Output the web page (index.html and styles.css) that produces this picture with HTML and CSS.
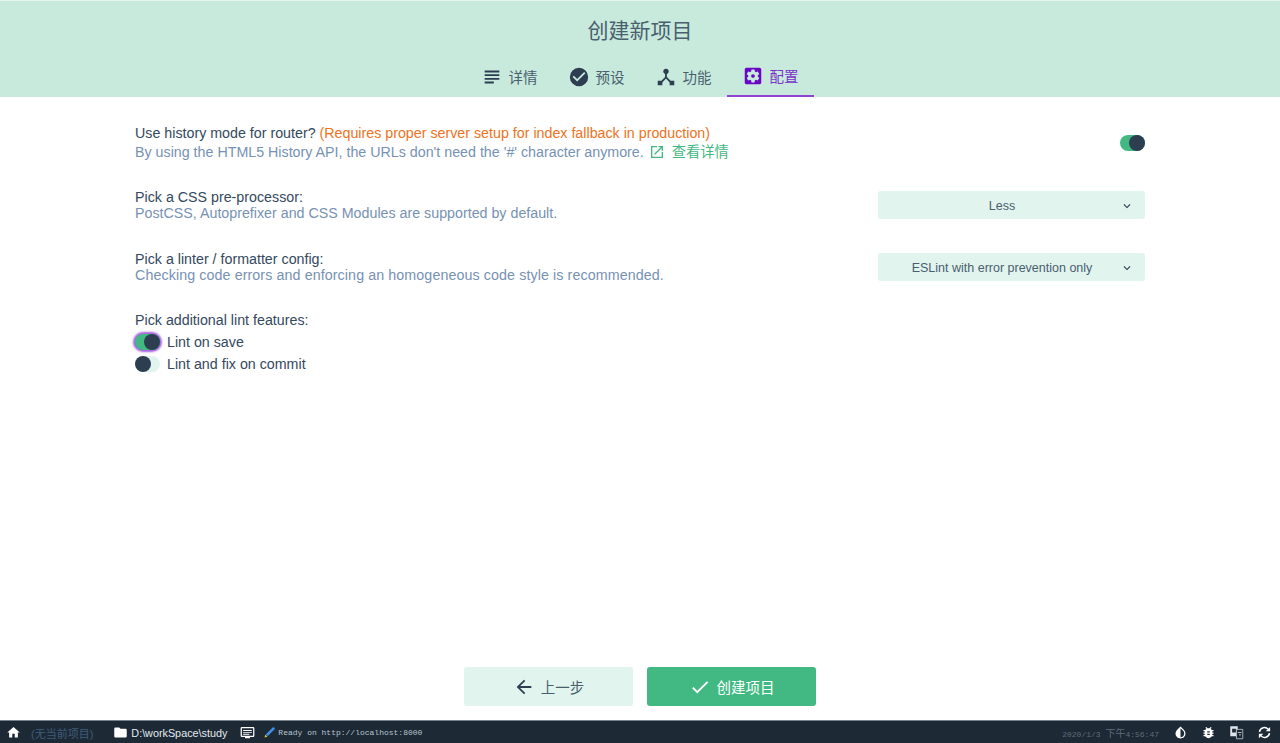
FILE: index.html
```html
<!DOCTYPE html>
<html lang="zh-CN">
<head>
  <meta charset="UTF-8" />
  <title>创建新项目</title>
  <link rel="stylesheet" href="styles.css">
</head>
<body>

  <header class="top">
    <div class="title">创建新项目</div>
    <nav class="tabs">
      <a class="tab">
        <svg class="tab-icon" viewBox="0 0 24 24"><path d="M14 17H4v2h10v-2zm6-8H4v2h16V9zM4 15h16v-2H4v2zM4 5v2h16V5H4z"/></svg>
        <span>详情</span>
      </a>
      <a class="tab">
        <svg class="tab-icon" viewBox="0 0 24 24"><path d="M12 2a10 10 0 1 0 0 20 10 10 0 0 0 0-20zm-2 15l-5-5 1.400-1.400 3.600 3.600 7.600-7.600L19 8l-9 9z"/></svg>
        <span>预设</span>
      </a>
      <a class="tab">
        <svg class="tab-icon" viewBox="0 0 24 24"><path d="M17 16l-4-4V8.800a3 3 0 1 0-2 0V12l-4 4H3v5h5v-3.100l4-4.200 4 4.200V21h5v-5h-4z"/></svg>
        <span>功能</span>
      </a>
      <a class="tab active">
        <svg class="tab-icon" viewBox="0 0 24 24"><path d="M12 10c-1.100 0-2 .9-2 2s.9 2 2 2 2-.9 2-2-.9-2-2-2zm7-7H5c-1.110 0-2 .9-2 2v14c0 1.100.89 2 2 2h14c1.100 0 2-.9 2-2V5c0-1.100-.9-2-2-2zm-1.750 9c0 .23-.02.46-.05.68l1.480 1.160c.13.11.17.3.08.45l-1.400 2.420c-.09.15-.27.21-.43.15l-1.740-.7c-.36.28-.76.51-1.180.69l-.26 1.850c-.03.17-.18.3-.35.3h-2.800c-.17 0-.32-.13-.35-.29l-.26-1.850c-.43-.18-.82-.41-1.180-.69l-1.740.7c-.16.06-.34 0-.43-.15l-1.400-2.420c-.09-.15-.05-.34.08-.45l1.480-1.160c-.03-.23-.05-.46-.05-.69 0-.23.02-.46.05-.68l-1.480-1.160c-.13-.11-.17-.3-.08-.45l1.400-2.420c.09-.15.27-.21.43-.15l1.740.7c.36-.28.76-.51 1.180-.69l.26-1.850c.03-.17.18-.3.35-.3h2.800c.17 0 .32.13.35.29l.26 1.850c.43.18.82.41 1.180.69l1.740-.7c.16-.06.34 0 .43.15l1.400 2.420c.09.15.05.34-.08.45l-1.480 1.160c.03.23.05.46.05.69z"/></svg>
        <span>配置</span>
      </a>
    </nav>
  </header>

  <main class="content">
    <div class="prompt prompt-first">
      <div class="prompt-text">
        <div class="prompt-label">Use history mode for router? <span class="warn">(Requires proper server setup for index fallback in production)</span></div>
        <div class="prompt-desc">By using the HTML5 History API, the URLs don't need the '#' character anymore.
          <a class="more">
            <svg class="more-icon" viewBox="0 0 24 24"><path d="M19 19H5V5h7V3H3v18h18v-9h-2v7zM14 3v2h3.600l-9.800 9.800 1.400 1.400L19 6.400V10h2V3h-7z"/></svg>
            查看详情
          </a>
        </div>
      </div>
      <span class="switch on"><i></i></span>
    </div>

    <div class="prompt">
      <div class="prompt-text">
        <div class="prompt-label">Pick a CSS pre-processor:</div>
        <div class="prompt-desc">PostCSS, Autoprefixer and CSS Modules are supported by default.</div>
      </div>
      <div class="select">
        <span>Less</span>
        <svg class="chevron" viewBox="0 0 24 24"><path d="M7.400 8.600L12 13.200l4.600-4.600L18 10l-6 6-6-6z"/></svg>
      </div>
    </div>

    <div class="prompt">
      <div class="prompt-text">
        <div class="prompt-label">Pick a linter / formatter config:</div>
        <div class="prompt-desc wide">Checking code errors and enforcing an homogeneous code style is recommended.</div>
      </div>
      <div class="select">
        <span>ESLint with error prevention only</span>
        <svg class="chevron" viewBox="0 0 24 24"><path d="M7.400 8.600L12 13.200l4.600-4.600L18 10l-6 6-6-6z"/></svg>
      </div>
    </div>

    <div class="checks">
      <div class="prompt-label">Pick additional lint features:</div>
      <div class="check">
        <span class="switch on focused"><i></i></span>
        <span>Lint on save</span>
      </div>
      <div class="check">
        <span class="switch"><i></i></span>
        <span>Lint and fix on commit</span>
      </div>
    </div>
  </main>

  <div class="actions">
    <button class="btn btn-light">
      <svg class="btn-icon" viewBox="0 0 24 24"><path d="M20 11H7.800l5.600-5.600L12 4l-8 8 8 8 1.400-1.400L7.800 13H20z"/></svg>
      上一步
    </button>
    <button class="btn btn-green">
      <svg class="btn-icon" viewBox="0 0 24 24"><path d="M9 16.200L4.800 12l-1.400 1.400L9 19 21 7l-1.400-1.400z"/></svg>
      创建项目
    </button>
  </div>

  <footer class="status">
    <svg class="st-icon home" viewBox="0 0 24 24"><path d="M10 20v-6h4v6h5v-8h3L12 3 2 12h3v8z"/></svg>
    <span class="no-project">(无当前项目)</span>
    <svg class="st-icon folder" viewBox="0 0 24 24"><path d="M10 4H4a2 2 0 0 0-2 2v12a2 2 0 0 0 2 2h16a2 2 0 0 0 2-2V8a2 2 0 0 0-2-2h-8l-2-2z"/></svg>
    <span class="path">D:\workSpace\study</span>
    <svg class="st-icon log" viewBox="0 0 24 24"><path d="M21 3H3a2 2 0 0 0-2 2v12a2 2 0 0 0 2 2h5v2h8v-2h5a2 2 0 0 0 2-2V5a2 2 0 0 0-2-2zm0 14H3V5h18v12zM5 8h14v1.500H5zm0 3h14v1.500H5zm0 3h10v1.500H5z"/></svg>
    <svg class="st-brush" viewBox="0 0 16 16">
      <path d="M14 2L6 10" stroke="#3f8de0" stroke-width="3.400" stroke-linecap="round"/>
      <path d="M2 14l1-4 3 3z" fill="#d8c23a"/>
    </svg>
    <span class="log-text">Ready on http://localhost:8000</span>
    <span class="spacer"></span>
    <span class="clock">2020/1/3 <span class="clock-cn">下午</span>4:56:47</span>
    <svg class="st-icon end drop" viewBox="0 0 24 24"><path d="M17.660 7.930L12 2.270 6.340 7.930c-3.120 3.120-3.120 8.190 0 11.310C7.900 20.800 9.950 21.580 12 21.580c2.050 0 4.100-.78 5.660-2.340 3.120-3.120 3.120-8.190 0-11.310zM12 19.590c-1.600 0-3.110-.62-4.240-1.760C6.620 16.690 6 15.190 6 13.590s.62-3.110 1.760-4.240L12 5.100v14.490z"/></svg>
    <svg class="st-icon end" viewBox="0 0 24 24"><path d="M20 8h-2.810c-.45-.78-1.070-1.450-1.820-1.960L17 4.410 15.590 3l-2.170 2.170C12.960 5.060 12.490 5 12 5c-.49 0-.96.06-1.410.17L8.410 3 7 4.410l1.620 1.630C7.880 6.550 7.260 7.220 6.810 8H4v2h2.090c-.05.33-.09.66-.09 1v1H4v2h2v1c0 .34.04.67.09 1H4v2h2.810c1.040 1.790 2.970 3 5.190 3s4.150-1.210 5.190-3H20v-2h-2.090c.05-.33.09-.66.09-1v-1h2v-2h-2v-1c0-.34-.04-.67-.09-1H20V8zm-6 8h-4v-2h4v2zm0-4h-4v-2h4v2z"/></svg>
    <svg class="st-icon end" viewBox="0 0 24 24">
      <path d="M2 2h12v16H2z" fill="#dfe5ea"/>
      <path d="M12 7h10v15H12z" fill="#1d2935" stroke="#aab4bd" stroke-width="1.500"/>
      <path d="M5 6h6v6H5z" fill="#1d2935"/>
      <path d="M14 11h6v1.500h-6zm2 4h3v1.500h-3z" fill="#e8eef4"/>
    </svg>
    <svg class="st-icon end sync" viewBox="0 0 24 24">
      <path d="M4 11a8 8 0 0 1 14-4" fill="none" stroke="#fff" stroke-width="2.400"/>
      <path d="M21 3v7h-7z" fill="#fff"/>
      <path d="M20 13a8 8 0 0 1-14 4" fill="none" stroke="#fff" stroke-width="2.400"/>
      <path d="M3 21v-7h7z" fill="#fff"/>
    </svg>
  </footer>

</body>
</html>
```

FILE: styles.css
```css
html, body {
  height: 100%;
}

body {
  margin: 0;
  height: 743px;
  overflow: hidden;
  display: flex;
  flex-direction: column;
  font-family: "Liberation Sans", "Noto Sans CJK SC", sans-serif;
  font-size: 14.25px;
  color: #2c3e50;
  background: white;
}

/* top bar */
.top {
  height: 97px;
  box-sizing: border-box;
  background: #c7eadd;
  border-top: 1px solid #e6f5ef;
  flex: none;
  display: flex;
  flex-direction: column;
  align-items: center;
}

.title {
  font-size: 21px;
  line-height: 24px;
  margin-top: 18px;
  color: #4a5f6e;
}

.tabs {
  display: flex;
  margin-top: 12px;
}

.tab {
  width: 87px;
  height: 42px;
  box-sizing: border-box;
  padding: 1px 1px 0 0;
  display: flex;
  align-items: center;
  justify-content: center;
  gap: 6px;
  font-size: 14.5px;
  color: #4a5f6e;
}

.tab-icon {
  width: 22px;
  height: 22px;
  fill: #2c3e50;
}

.tab.active {
  color: #7b33c9;
  border-bottom: 2px solid #8e44d0;
}

.tab.active .tab-icon {
  fill: #6a06c4;
}

/* prompts */
.content {
  flex: 1;
  padding: 28px 135px 0;
}

.prompt {
  display: flex;
  justify-content: space-between;
  align-items: center;
  height: 30px;
  margin-bottom: 32px;
}

.prompt-first {
  height: 37px;
  margin-bottom: 28px;
}

.prompt-first .switch {
  margin-bottom: 1px;
}

.prompt-label {
  line-height: 17px;
  color: #34495e;
}

.warn {
  color: #ee7322;
}

.prompt-desc {
  line-height: 15px;
  color: #7792b2;
}

.prompt-desc.wide {
  letter-spacing: 0.1px;
}

.prompt-first .prompt-desc {
  line-height: 20px;
}

.more {
  color: #42b983;
  margin-left: 1px;
}

.more-icon {
  width: 16px;
  height: 16px;
  fill: #42b983;
  vertical-align: -3px;
  margin-right: 3px;
}

.switch {
  display: block;
  position: relative;
  width: 25px;
  height: 16px;
  border-radius: 8px;
  background: #e1f4ed;
  flex: none;
}

.switch i {
  position: absolute;
  left: 0;
  top: 0;
  width: 16px;
  height: 16px;
  border-radius: 50%;
  background: #2c3e50;
}

.switch.on {
  background: #42b983;
}

.switch.on i {
  left: 9px;
}

.switch.focused {
  box-shadow: 0 0 2px 2px #a55fe0;
}

.select {
  width: 267px;
  height: 28px;
  box-sizing: border-box;
  padding: 1px 11px 0 6px;
  display: flex;
  align-items: center;
  background: #e2f4ee;
  border-radius: 3px;
  font-size: 12.5px;
  color: #4a5f6e;
  flex: none;
}

.select span {
  flex: 1;
  text-align: center;
}

.chevron {
  width: 14px;
  height: 14px;
  fill: #2c3e50;
}

.checks {
  margin-top: -2px;
}

.check {
  display: flex;
  align-items: center;
  gap: 7px;
  height: 22px;
  color: #34495e;
}

.prompt-label + .check {
  margin-top: 2px;
}

/* bottom buttons */
.actions {
  flex: none;
  display: flex;
  justify-content: center;
  gap: 14px;
  height: 39px;
  margin-bottom: 14px;
}

.btn {
  width: 169px;
  height: 39px;
  border: none;
  border-radius: 3px;
  display: flex;
  align-items: center;
  justify-content: center;
  gap: 6px;
  font-family: inherit;
  font-size: 14.5px;
}

.btn-icon {
  width: 22px;
  height: 22px;
  fill: currentColor;
}

.btn-light {
  background: #e2f4ee;
  color: #4a5f6e;
}

.btn-light .btn-icon {
  fill: #2c3e50;
}

.btn-green {
  background: #42b983;
  color: white;
}

/* status bar */
.status {
  flex: none;
  height: 23px;
  box-sizing: border-box;
  background: #1d2935;
  border-top: 1px solid #77828c;
  display: flex;
  align-items: center;
  padding: 1px 8px 0 6px;
  color: #e4eaf0;
  font-size: 10.8px;
}

.st-icon {
  width: 15px;
  height: 15px;
  fill: #ffffff;
  flex: none;
}

.no-project {
  color: #3f5d7c;
  font-size: 11px;
  margin-left: 10px;
}

.folder {
  margin-left: 20px;
}

.path {
  margin-left: 3px;
}

.log {
  margin-left: 13px;
}

.st-brush {
  width: 12px;
  height: 12px;
  margin-left: 8px;
}

.log-text {
  font-family: "Liberation Mono", monospace;
  font-size: 8px;
  margin-left: 3px;
  color: #b9c4ce;
}

.spacer {
  flex: 1;
}

.clock {
  font-family: "Liberation Mono", "Noto Sans CJK SC", monospace;
  font-size: 8px;
  color: #5e6d7b;
  margin-right: 14px;
}

.clock-cn {
  font-size: 10px;
}

.end {
  margin-left: 13px;
}

.clock + .end {
  margin-left: 0;
}

.drop {
  transform: scaleX(-1);
}
```
